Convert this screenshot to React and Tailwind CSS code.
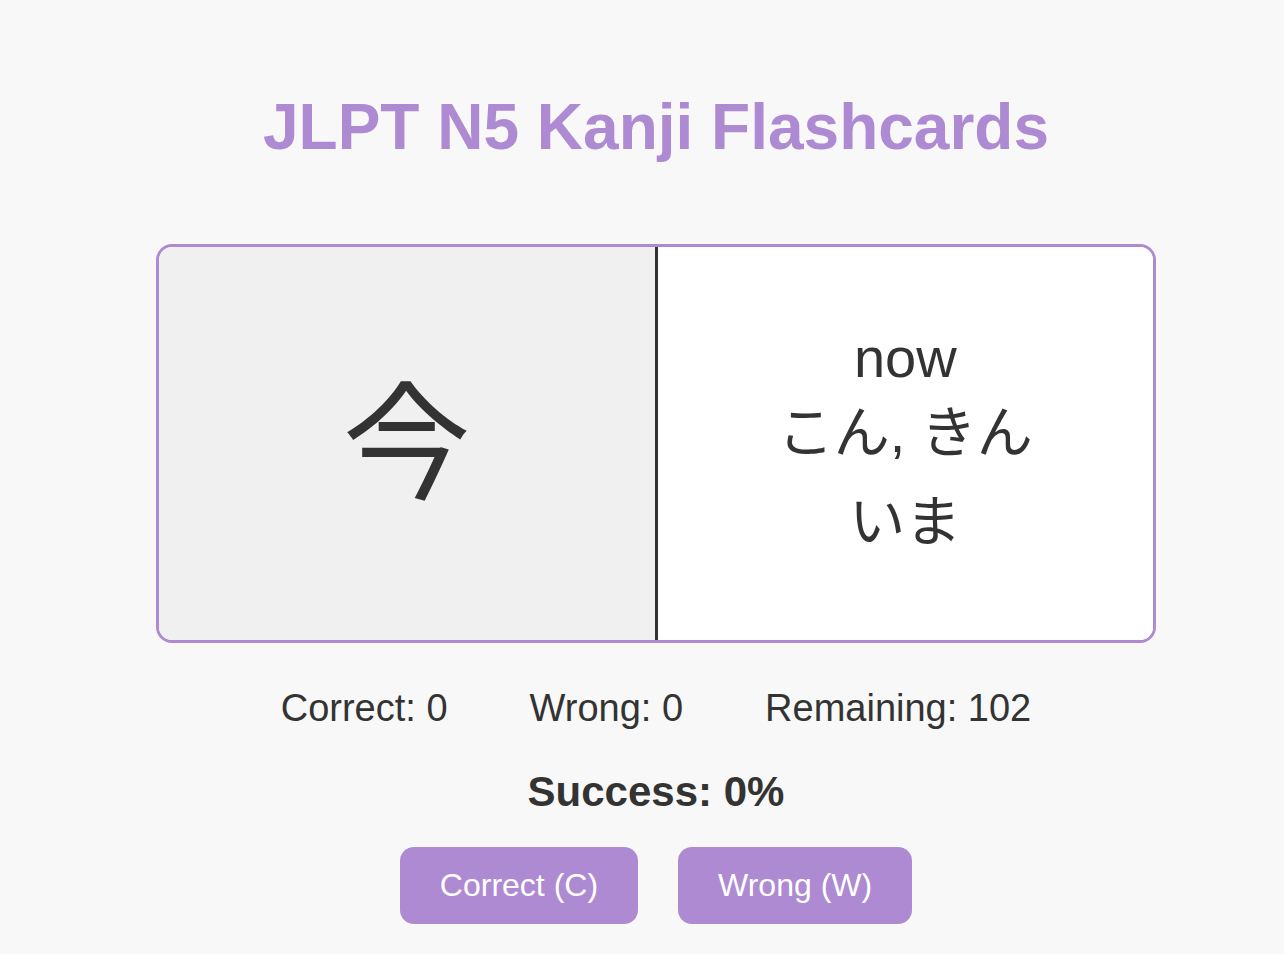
import React, { useState } from 'react'

const font = { fontFamily: '"Liberation Sans", "Noto Sans CJK JP", sans-serif' }

const Flashcards = () => {
    const [correct, setCorrect] = useState(0)
    const [wrong, setWrong] = useState(0)
    const remaining = 102
    const total = correct + wrong
    const success = total === 0 ? 0 : Math.round((correct / total) * 100)

    return (
        <div className="min-h-[954px] bg-[#f8f8f8] text-[#333333] font-['Liberation_Sans','Noto_Sans_CJK_JP',sans-serif]">
            <div className="w-[1000px] ml-[156px] pt-[90px] flex flex-col items-center">
                {/* Title */}
                <h1 className="text-[64px] font-bold text-[#ae8ad3] leading-[74px]">JLPT N5 Kanji Flashcards</h1>

                {/* Card */}
                <div className="mt-[80px] w-[1000px] h-[399px] flex border-[3px] border-[#ae8ad3] rounded-[16px] overflow-hidden">
                    <div className="flex-1 bg-[#f0f0f0] flex items-center justify-center border-r-[3px] border-[#333333] pt-[4px]">
                        <span className="text-[128px] leading-none">今</span>
                    </div>
                    <div className="flex-1 bg-white flex flex-col items-center justify-center text-[56px] pt-[7px]">
                        <div className="leading-[66px]">now</div>
                        <div className="leading-[84px]">こん, きん</div>
                        <div className="leading-[94px]">いま</div>
                    </div>
                </div>

                {/* Stats */}
                <div className="mt-[43px] flex items-center text-[38px] leading-[44px]">
                    <span className="mx-[41px]">Correct: {correct}</span>
                    <span className="mx-[41px]">Wrong: {wrong}</span>
                    <span className="mx-[41px]">Remaining: {remaining}</span>
                </div>

                <div className="mt-[38px] text-[42px] font-bold leading-[48px]">Success: {success}%</div>

                {/* Buttons */}
                <div className="mt-[31px] flex gap-[40px]">
                    <button
                        onClick={() => setCorrect(c => c + 1)}
                        className="bg-[#ae8ad3] text-white text-[32px] leading-[37px] px-[40px] py-[20px] rounded-[14px]"
                    >
                        Correct (C)
                    </button>
                    <button
                        onClick={() => setWrong(w => w + 1)}
                        className="bg-[#ae8ad3] text-white text-[32px] leading-[37px] px-[40px] py-[20px] rounded-[14px]"
                    >
                        Wrong (W)
                    </button>
                </div>
            </div>
        </div>
    )
}

export default function App() {
    return <div style={font}><Flashcards /></div>
}
